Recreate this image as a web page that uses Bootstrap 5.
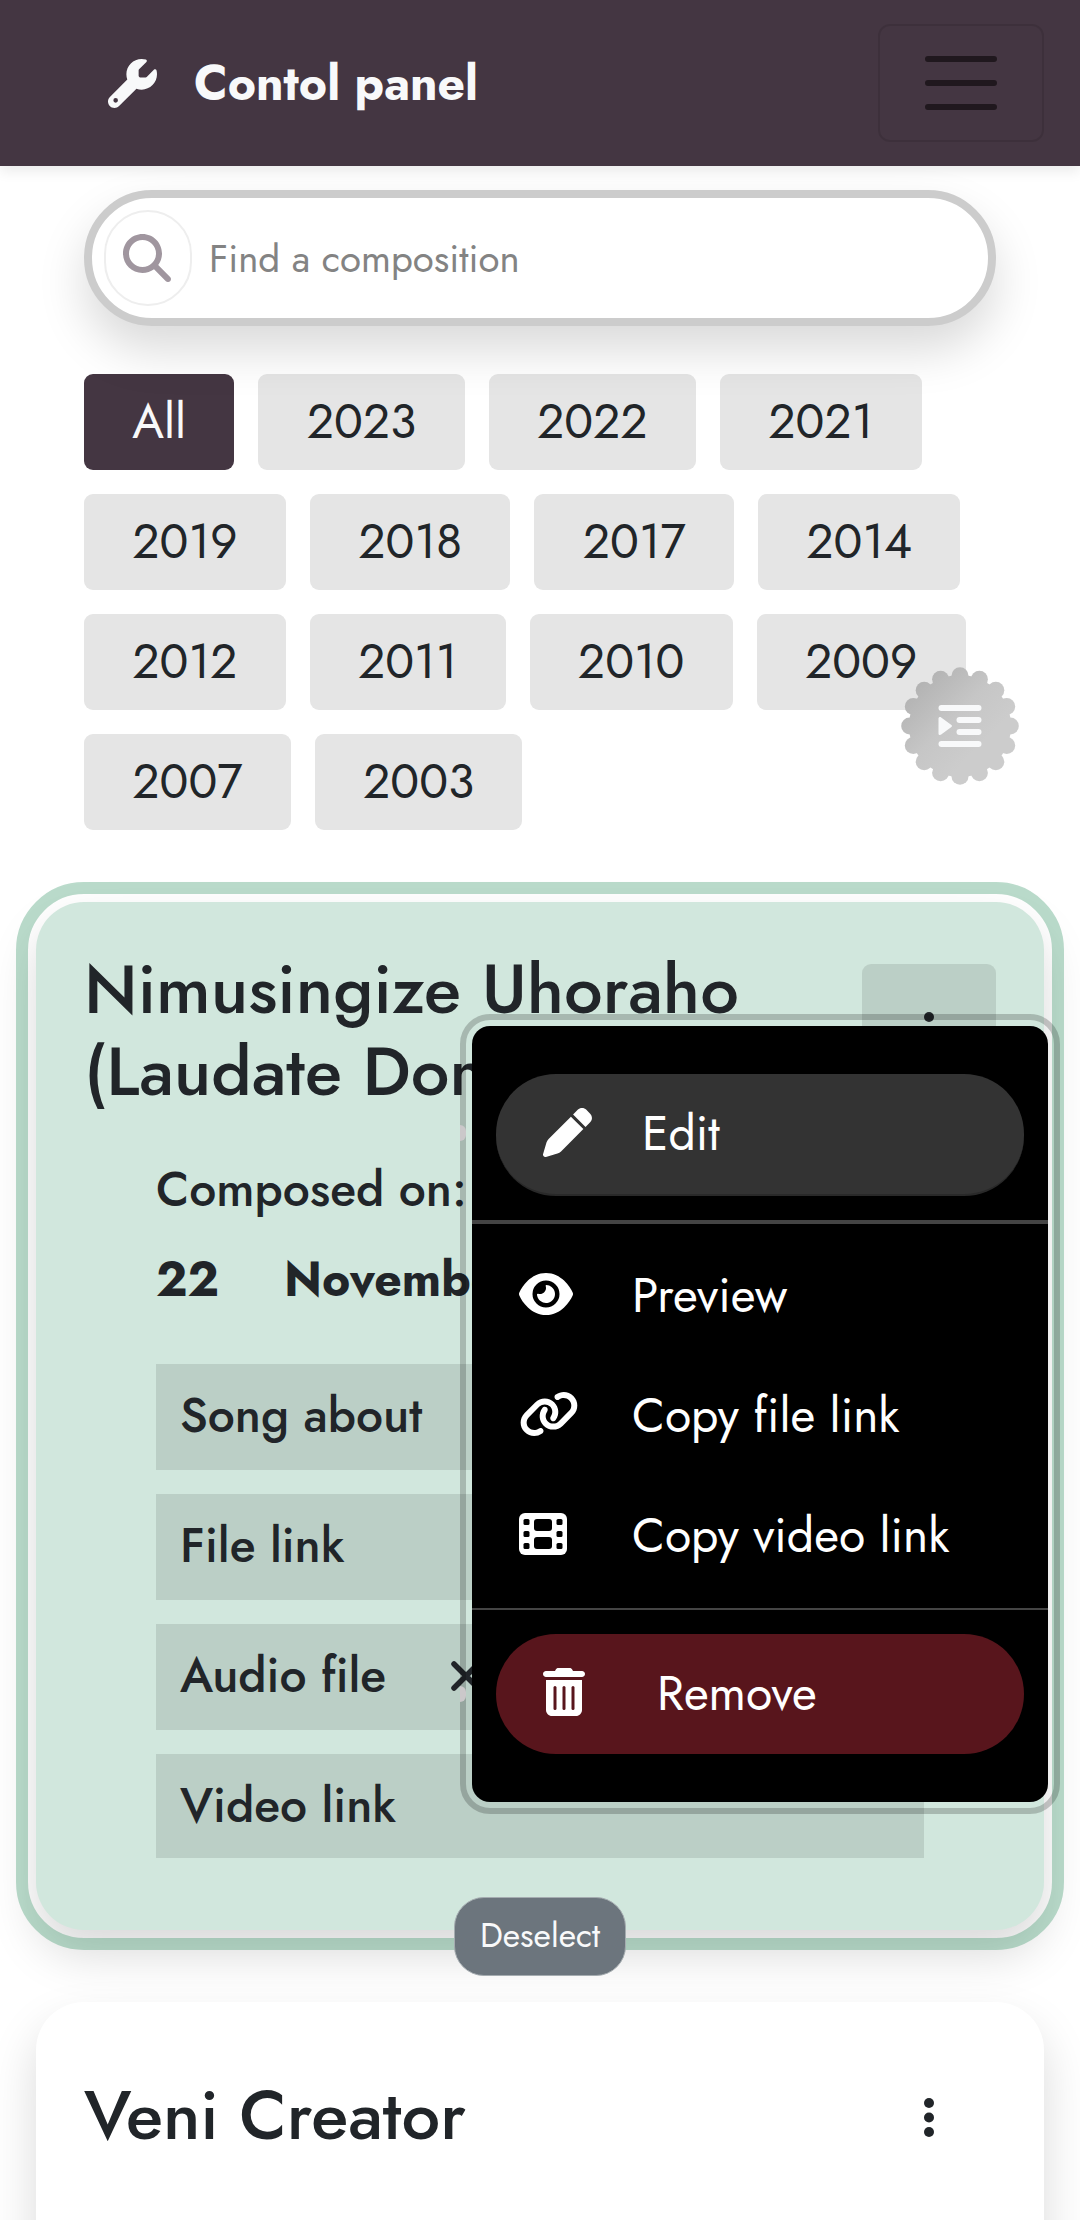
<!DOCTYPE html>
<html lang="en">
<head>
<meta charset="utf-8">
<meta name="viewport" content="width=device-width, initial-scale=1">
<title>Contol panel</title>
<link href="https://cdn.jsdelivr.net/npm/bootstrap@5.3.0/dist/css/bootstrap.min.css" rel="stylesheet">
<style>
  html { font-size: 48px; }
  body { font-family: Jost, Lato, "Open Sans", sans-serif; height: 2220px; overflow: hidden; background: #fff; }
  svg { display: block; flex: none; }
  .topbar { height: 166px; padding: 0 36px 0 108px; background: #443642; z-index: 5; box-shadow: 0 6px 12px rgba(0,0,0,.075); }
  .brand { color: #f8f9fa; margin-left: 37px; padding-top: 2px; }
  .burger { width: 166px; height: 118px; border: 2px solid rgba(0,0,0,.1); border-radius: 12px; padding: 0; }
  .page { padding: 24px 36px 0; }
  .finder { height: 136px; border: 8px solid #ccc; border-radius: 68px; background: #fff; padding: 0 12px; z-index: 2; box-shadow: 0 24px 48px rgba(0,0,0,.15); }
  .finder-icon { width: 88px; height: 96px; border: 2px solid #eee; border-radius: 44px; color: #a0969f; padding-right: 2px; }
  .finder-hint { font-size: 38.4px; color: #838383; margin-left: 17px; padding-top: 2px; }
  .years { gap: 24px; margin-top: 48px; }
  .year { height: 96px; border: 0; border-radius: 9px; background: #e5e5e5; color: #212529; padding: 0 48.3px; }
  .year.active { background: #443642; color: #f8f9fa; }
  .fab { position: absolute; left: 901px; top: 667px; z-index: 4; }
  .song { border: 0; border-radius: 48px; padding: 48px; box-shadow: 0 24px 48px rgba(0,0,0,.15); margin-top: 72px; background: #fff; height: 800px; }
  .song.selected { height: 1028px; background: #d1e7dd; outline: 12px solid rgba(25,135,84,.3); outline-offset: 8px; }
  .song-title { font-size: 68.7px; line-height: 82px; font-weight: 500; margin: 0; transform: translateY(-1px); }
  .kebab { width: 134px; height: 134px; border: 0; border-radius: 9px; background: transparent; padding: 0; color: #212529; }
  .selected .kebab { background: rgba(0,0,0,.1); margin-bottom: 2px; }
  .details { padding: 40px 72px 0; }
  .date-row { margin-top: 18px; }
  .date-day { width: 128px; }
  .fields { gap: 24px; margin-top: 48px; }
  .field { height: 106px; background: rgba(0,0,0,.1); padding: 0 24px 3px; }
  .field:last-child { height: 104px; padding-bottom: 1px; }
  .cross { margin-left: 65px; }
  .deselect { position: absolute; left: 418px; top: 995px; width: 172px; height: 79px; border: 1px solid #a5acb0; border-radius: 30px; background: #6c757d; color: #f8f9fa; font-size: 33.6px; padding: 0; z-index: 2; }
  .song-menu { position: absolute; left: 436px; top: 124px; width: 576px; height: 776px; padding: 48px 0; border-radius: 18px; background: #000; color: #fff; outline: 6px solid rgba(0,0,0,.2); outline-offset: 6px; z-index: 3; }
  .song-menu svg { transform: translateY(-2px); }
  .pill { margin: 0 24px; height: 120px; border-radius: 60px; padding: 0 0 0 47px; }
  .pill-edit { height: 122px; background: #333; border-bottom: 2px solid #292929; }
  .pill-remove { background: #58151c; }
  .entry { height: 120px; padding: 0 0 0 47px; }
  .rule { background: #444; height: 4px; margin: 24px 0 12px; }
  .rule-thin { background: #444; height: 2px; margin: 12px 0 24px; }
  .ico-pill { width: 99px; } .ico-bin { width: 114px; } .ico-entry { width: 113px; }
  .nub { position: absolute; left: -12px; width: 6px; height: 16px; border-radius: 0 8px 8px 0; background: #cbc8ca; }
  .nub-a { top: 99px; } .nub-b { top: 660px; }
</style>
<script src="https://cdn.jsdelivr.net/npm/bootstrap@5.3.0/dist/js/bootstrap.bundle.min.js"></script>
</head>
<body class="position-relative">
<nav class="topbar d-flex align-items-center position-relative">
  <svg width="49" height="49" viewBox="0 0 512 512" fill="#f8f9fa"><path d="M352 320c88.4 0 160-71.6 160-160c0-15.3-2.2-30.1-6.2-44.2c-3.1-10.8-16.4-13.2-24.3-5.3l-76.8 76.8c-3 3-7.1 4.7-11.3 4.7H336c-8.8 0-16-7.2-16-16V118.6c0-4.2 1.7-8.3 4.7-11.3l76.8-76.8c7.9-7.9 5.4-21.2-5.3-24.3C382.1 2.2 367.3 0 352 0C263.6 0 192 71.6 192 160c0 19.1 3.4 37.5 9.5 54.5L19.9 396.1C7.2 408.8 0 426.1 0 444.1C0 481.6 30.4 512 67.9 512c18 0 35.3-7.2 48-19.9L297.5 310.5c17 6.2 35.4 9.5 54.5 9.5zM80 408a24 24 0 1 1 0 48 24 24 0 1 1 0-48z"/></svg>
  <span class="brand fw-bold text-nowrap">Contol panel</span>
  <button class="burger navbar-toggler ms-auto d-flex align-items-center justify-content-center" type="button" aria-label="Menu">
    <svg width="90" height="90" viewBox="0 0 30 30" stroke="#20181e" stroke-width="2" stroke-linecap="round"><path d="M4 7h22M4 15h22M4 23h22"/></svg>
  </button>
</nav>
<main class="page">
  <div class="mx-3">
    <div class="finder d-flex align-items-center position-relative">
      <span class="finder-icon d-flex align-items-center justify-content-center">
        <svg width="48" height="48" viewBox="0 0 512 512" fill="currentColor"><path d="M416 208c0 45.9-14.9 88.3-40 122.7L502.6 457.4c12.5 12.5 12.5 32.8 0 45.3s-32.8 12.5-45.3 0L330.7 376c-34.4 25.2-76.8 40-122.7 40C93.1 416 0 322.9 0 208S93.1 0 208 0S416 93.1 416 208zM208 352a144 144 0 1 0 0-288 144 144 0 1 0 0 288z"/></svg>
      </span>
      <span class="finder-hint text-nowrap">Find a composition</span>
    </div>
    <div class="years d-flex flex-wrap">
      <button class="btn year active">All</button>
      <button class="btn year">2023</button>
      <button class="btn year">2022</button>
      <button class="btn year">2021</button>
      <button class="btn year">2019</button>
      <button class="btn year">2018</button>
      <button class="btn year">2017</button>
      <button class="btn year">2014</button>
      <button class="btn year">2012</button>
      <button class="btn year">2011</button>
      <button class="btn year">2010</button>
      <button class="btn year">2009</button>
      <button class="btn year">2007</button>
      <button class="btn year">2003</button>
    </div>
  </div>

  <section class="song selected card">
    <div class="d-flex align-items-center justify-content-between">
      <h2 class="song-title text-nowrap">Nimusingize Uhoraho<br>(Laudate Dominum)</h2>
      <button class="kebab d-flex align-items-center justify-content-center" aria-label="Options">
        <svg width="10" height="39" viewBox="0 0 10 39" fill="currentColor"><circle cx="5" cy="5" r="5"/><circle cx="5" cy="19.5" r="5"/><circle cx="5" cy="34" r="5"/></svg>
      </button>
    </div>
    <div class="details">
      <div class="text-nowrap fw-medium">Composed on:</div>
      <div class="date-row d-flex fw-bold text-nowrap"><span class="date-day">22</span><span>November</span></div>
      <div class="fields d-flex flex-column fw-medium">
        <div class="field d-flex align-items-center">Song about</div>
        <div class="field d-flex align-items-center">File link</div>
        <div class="field d-flex align-items-center">Audio file
          <svg class="cross" width="30" height="30" viewBox="0 0 30 30" stroke="#212529" stroke-width="5.5" stroke-linecap="round"><path d="M3 3l24 24M27 3L3 27"/></svg></div>
        <div class="field d-flex align-items-center">Video link</div>
      </div>
    </div>
    <button class="deselect btn d-flex align-items-center justify-content-center">Deselect</button>
    <div class="song-menu text-nowrap">
      <i class="nub nub-a"></i><i class="nub nub-b"></i>
      <div class="pill pill-edit d-flex align-items-center"><span class="ico-pill"><svg width="49" height="49" viewBox="0 0 512 512" fill="#fff"><path d="M362.7 19.3L314.3 67.7 444.3 197.7l48.4-48.4c25-25 25-65.5 0-90.5L453.3 19.3c-25-25-65.5-25-90.5 0zm-71 71L58.6 323.5c-10.4 10.4-18 23.3-22.2 37.4L1 481.2C-1.5 489.7 .8 498.8 7 505s15.3 8.5 23.7 6.1l120.3-35.4c14.1-4.2 27-11.8 37.4-22.2L421.7 220.3 291.7 90.3z"/></svg></span>Edit</div>
      <div class="rule"></div>
      <div class="entry d-flex align-items-center"><span class="ico-entry"><svg width="54" height="48" viewBox="0 0 576 512" fill="#fff"><path d="M288 32c-80.8 0-145.5 36.8-192.6 80.6C48.6 156 17.3 208 2.5 243.7c-3.3 7.9-3.3 16.7 0 24.6C17.3 304 48.6 356 95.4 399.4C142.5 443.2 207.2 480 288 480s145.5-36.8 192.6-80.6c46.8-43.5 78.1-95.4 93-131.1c3.3-7.9 3.3-16.7 0-24.6c-14.9-35.7-46.2-87.7-93-131.1C433.5 68.8 368.8 32 288 32zM144 256a144 144 0 1 1 288 0 144 144 0 1 1 -288 0zm144-64c0 35.3-28.7 64-64 64c-7.1 0-13.9-1.2-20.3-3.3c-5.5-1.8-11.9 1.6-11.7 7.4c.3 6.9 1.3 13.8 3.2 20.7c13.7 51.2 66.4 81.6 117.6 67.9s81.6-66.4 67.9-117.6c-11.1-41.5-47.8-69.4-88.6-71.1c-5.8-.2-9.2 6.1-7.4 11.7c2.1 6.4 3.3 13.2 3.3 20.3z"/></svg></span>Preview</div>
      <div class="entry d-flex align-items-center"><span class="ico-entry"><svg width="60" height="48" viewBox="0 0 640 512" fill="#fff"><path d="M579.8 267.7c56.5-56.5 56.5-148 0-204.5c-50-50-128.8-56.5-186.3-15.4l-1.6 1.1c-14.4 10.3-17.7 30.3-7.4 44.6s30.3 17.7 44.6 7.4l1.6-1.1c32.1-22.9 76-19.3 103.8 8.6c31.5 31.5 31.5 82.5 0 114L422.3 334.8c-31.5 31.5-82.5 31.5-114 0c-27.9-27.9-31.5-71.8-8.6-103.8l1.1-1.6c10.3-14.4 6.9-34.4-7.4-44.6s-34.4-6.9-44.6 7.4l-1.1 1.6C206.5 251.2 213 330 263 380c56.5 56.5 148 56.5 204.5 0L579.8 267.7zM60.2 244.3c-56.5 56.5-56.5 148 0 204.5c50 50 128.8 56.5 186.3 15.4l1.6-1.1c14.4-10.3 17.7-30.3 7.4-44.6s-30.3-17.7-44.6-7.4l-1.6 1.1c-32.1 22.9-76 19.3-103.8-8.6C74 372 74 321 105.5 289.5L217.7 177.2c31.5-31.5 82.5-31.5 114 0c27.9 27.9 31.5 71.8 8.6 103.9l-1.1 1.6c-10.3 14.4-6.9 34.4 7.4 44.6s34.4 6.9 44.6-7.4l1.1-1.6C433.5 260.8 427 182 377 132c-56.5-56.5-148-56.5-204.5 0L60.2 244.3z"/></svg></span>Copy file link</div>
      <div class="entry d-flex align-items-center"><span class="ico-entry"><svg width="48" height="42" viewBox="0 0 48 42"><rect width="48" height="42" rx="6" fill="#fff"/><g fill="#000"><rect x="4.5" y="6" width="6" height="6" rx="1.5"/><rect x="4.5" y="18" width="6" height="6" rx="1.5"/><rect x="4.5" y="30" width="6" height="6" rx="1.5"/><rect x="37.5" y="6" width="6" height="6" rx="1.5"/><rect x="37.5" y="18" width="6" height="6" rx="1.5"/><rect x="37.5" y="30" width="6" height="6" rx="1.5"/><rect x="15" y="6" width="18" height="12" rx="3"/><rect x="15" y="24" width="18" height="12" rx="3"/></g></svg></span>Copy video link</div>
      <div class="rule-thin"></div>
      <div class="pill pill-remove d-flex align-items-center"><span class="ico-bin"><svg width="42" height="48" viewBox="0 0 448 512" fill="#fff"><path d="M135.2 17.7C140.6 6.8 151.7 0 163.8 0H284.2c12.1 0 23.2 6.8 28.6 17.7L320 32h96c17.7 0 32 14.3 32 32s-14.3 32-32 32H32C14.3 96 0 81.7 0 64S14.3 32 32 32h96zM32 128H416V448c0 35.3-28.7 64-64 64H96c-35.3 0-64-28.7-64-64z"/><g fill="#58151c"><rect x="112" y="192" width="32" height="256" rx="16"/><rect x="208" y="192" width="32" height="256" rx="16"/><rect x="304" y="192" width="32" height="256" rx="16"/></g></svg></span>Remove</div>
    </div>
  </section>

  <section class="song card">
    <div class="d-flex align-items-center justify-content-between">
      <h2 class="song-title text-nowrap">Veni Creator</h2>
      <button class="kebab d-flex align-items-center justify-content-center" aria-label="Options">
        <svg width="10" height="39" viewBox="0 0 10 39" fill="currentColor"><circle cx="5" cy="5" r="5"/><circle cx="5" cy="19.5" r="5"/><circle cx="5" cy="34" r="5"/></svg>
      </button>
    </div>
  </section>
</main>
<svg class="fab" width="118" height="118" viewBox="-59 -59 118 118">
  <defs><linearGradient id="seal" gradientUnits="userSpaceOnUse" x1="-38" y1="-42" x2="22" y2="18"><stop offset="0" stop-color="#b4b4b4"/><stop offset=".55" stop-color="#c6c6c6"/><stop offset="1" stop-color="#cccccc"/></linearGradient></defs>
  <g fill="url(#seal)">
    <circle r="51"/>
    <circle cx="0" cy="-50.3" r="8.500"/><circle cx="19.4" cy="-46.7" r="8.500"/><circle cx="35.8" cy="-35.8" r="8.500"/><circle cx="46.7" cy="-19.4" r="8.500"/>
    <circle cx="50.3" cy="0" r="8.500"/><circle cx="46.7" cy="19.4" r="8.500"/><circle cx="35.8" cy="35.8" r="8.500"/><circle cx="19.4" cy="46.7" r="8.500"/>
    <circle cx="0" cy="50.3" r="8.500"/><circle cx="-19.4" cy="46.7" r="8.500"/><circle cx="-35.8" cy="35.8" r="8.500"/><circle cx="-46.7" cy="19.4" r="8.500"/>
    <circle cx="-50.3" cy="0" r="8.500"/><circle cx="-46.7" cy="-19.4" r="8.500"/><circle cx="-35.8" cy="-35.8" r="8.500"/><circle cx="-19.4" cy="-46.7" r="8.500"/>
  </g>
  <g stroke="#f8f9fa" stroke-width="6" stroke-linecap="round"><path d="M-18.5-18H18.500M-.5-6H18.500M-.5 6H18.500M-18.500 18H18.500"/></g>
  <path d="M-21.500-7.500c0-1.500 1.600-2 2.700-1.100L-8.600-1c.8.500.8 1.500 0 2L-18.800 8.600c-1.100.9-2.700.4-2.700-1.100z" fill="#f8f9fa"/>
</svg>
</body>
</html>
